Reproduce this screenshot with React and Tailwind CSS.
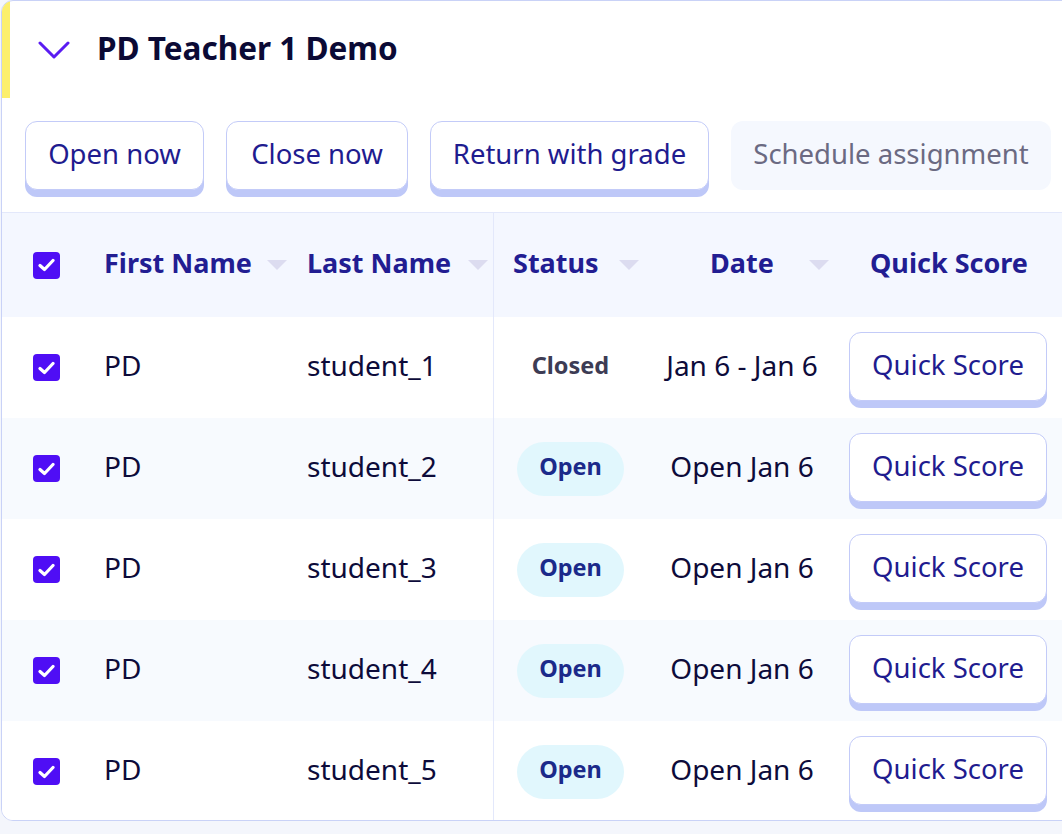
import React from 'react';

const students = [
  { first: 'PD', last: 'student_1', status: 'Closed', date: 'Jan 6 - Jan 6' },
  { first: 'PD', last: 'student_2', status: 'Open', date: 'Open Jan 6' },
  { first: 'PD', last: 'student_3', status: 'Open', date: 'Open Jan 6' },
  { first: 'PD', last: 'student_4', status: 'Open', date: 'Open Jan 6' },
  { first: 'PD', last: 'student_5', status: 'Open', date: 'Open Jan 6' },
];

const Check = () => (
  <div className="w-[27px] h-[27px] rounded-[4px] bg-[#4f0ef5] flex items-center justify-center">
    <svg width="17" height="14" viewBox="0 0 17 14">
      <path d="M2 7.5 L6.5 11.5 L15 2.5" fill="none" stroke="white" strokeWidth="3.2" strokeLinecap="round" strokeLinejoin="round" />
    </svg>
  </div>
);

const SortArrow = () => (
  <svg width="20" height="10" viewBox="0 0 20 10" className="shrink-0">
    <path d="M0 0 L20 0 L10 10 Z" fill="#dcdcf0" />
  </svg>
);

const ActionButton = ({ children, className = '' }) => (
  <button className={`h-[69px] pb-[3px] rounded-[12px] bg-white border border-[#c3cbf8] shadow-[0_7px_0_#bec8f8] text-[27.5px] text-[#1f1c8f] ${className}`}>
    {children}
  </button>
);

export default function App() {
  return (
    <div className="w-[1062px] h-[834px] overflow-hidden bg-[#f4f6fc] font-['Noto_Sans',sans-serif]">
      <div className="w-[1090px] ml-[1px] h-[821px] bg-white border border-[#c9d2f7] rounded-l-[12px] overflow-hidden">
        {/* header */}
        <div className="flex items-center h-[97px] border-l-[8px] border-[#fcef6c]">
          <svg width="32" height="18" viewBox="0 0 32 18" className="ml-[28px]">
            <path d="M2 2 L16 16 L30 2" fill="none" stroke="#5a1cf2" strokeWidth="3" strokeLinecap="round" strokeLinejoin="round" />
          </svg>
          <h1 className="ml-[27px] pb-[4px] text-[31.5px] font-bold text-[#0b0a35]">PD Teacher 1 Demo</h1>
        </div>

        {/* actions */}
        <div className="flex gap-[22px] pl-[23px] pt-[23px] h-[114px]">
          <ActionButton className="w-[179px]">Open now</ActionButton>
          <ActionButton className="w-[182px]">Close now</ActionButton>
          <ActionButton className="w-[279px]">Return with grade</ActionButton>
          <div className="h-[69px] w-[320px] pb-[3px] rounded-[12px] bg-[#f5f8fe] flex items-center justify-center text-[27.5px] text-[#6b6a82]">
            Schedule assignment
          </div>
        </div>

        {/* table */}
        <div className="border-t border-[#e3e8fb]">
          <div className="flex h-[104px] bg-[#f4f7ff] text-[27px] font-bold text-[#221d92]">
            <div className="w-[102px] pl-[31px] flex items-center"><Check /></div>
            <div className="w-[203px] flex items-center gap-[15px]"><span className="pb-[3px]">First Name</span><SortArrow /></div>
            <div className="w-[187px] flex items-center gap-[17px] border-r border-[#e3e8fb]"><span className="pb-[3px]">Last Name</span><SortArrow /></div>
            <div className="w-[158px] pl-[19px] flex items-center gap-[20px]"><span className="pb-[3px]">Status</span><SortArrow /></div>
            <div className="w-[180px] pl-[58px] flex items-center gap-[35px]"><span className="pb-[3px]">Date</span><SortArrow /></div>
            <div className="w-[217px] pl-[17px] pb-[3px] flex items-center justify-center">Quick Score</div>
          </div>
          {students.map((s, i) => (
            <div key={s.last} className={`flex h-[101px] text-[28px] text-[#0d0b3a] ${i % 2 === 1 ? 'bg-[#f7fafe]' : 'bg-white'}`}>
              <div className="w-[102px] pl-[31px] flex items-center"><Check /></div>
              <div className="w-[203px] pb-[5px] flex items-center">{s.first}</div>
              <div className="w-[187px] pb-[5px] flex items-center border-r border-[#e3e8fb]">{s.last}</div>
              <div className="w-[158px] pl-[23px] flex items-center">
                {s.status === 'Open' ? (
                  <span className="w-[107px] h-[54px] pb-[3px] rounded-full bg-[#e1f7fd] flex items-center justify-center text-[23.5px] font-bold text-[#1b2a8a]">Open</span>
                ) : (
                  <span className="w-[107px] pb-[4px] flex items-center justify-center text-[23.5px] font-bold text-[#3d3c54]">Closed</span>
                )}
              </div>
              <div className="w-[180px] pb-[5px] flex items-center justify-center">{s.date}</div>
              <div className="w-[217px] pl-[17px] flex items-center">
                <ActionButton className="w-[198px] -mt-[2px]">Quick Score</ActionButton>
              </div>
            </div>
          ))}
        </div>
      </div>
    </div>
  );
}
